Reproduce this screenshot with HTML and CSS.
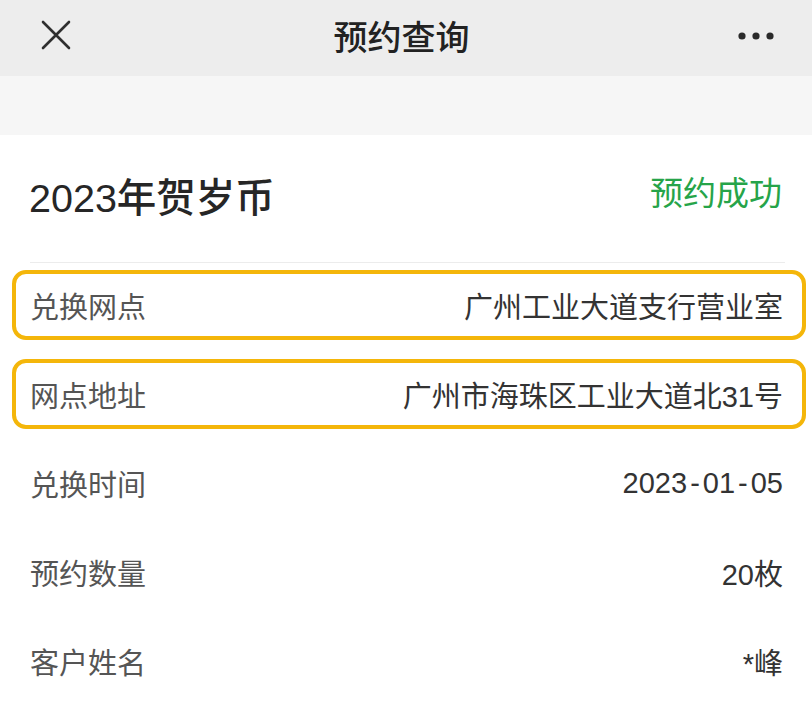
FILE: index.html
```html
<!DOCTYPE html>
<html lang="zh-CN">
<head>
<meta charset="utf-8">
<title>预约查询</title>
<link rel="stylesheet" href="styles.css">
</head>
<body>
<header class="navbar">
  <svg class="icon-close" width="30" height="30" viewBox="0 0 30 30"><path d="M2 2 L28 28 M28 2 L2 28" stroke="#2f2f2f" stroke-width="2.6" stroke-linecap="round"/></svg>
  <div class="nav-title">预约查询</div>
  <svg class="icon-more" width="36" height="10" viewBox="0 0 36 10"><circle cx="4" cy="5" r="3.6" fill="#2a2a2a"/><circle cx="18" cy="5" r="3.6" fill="#2a2a2a"/><circle cx="32" cy="5" r="3.6" fill="#2a2a2a"/></svg>
</header>
<div class="band"></div>
<main class="card">
  <div class="card-head">
    <div class="card-title">2023年贺岁币</div>
    <div class="status">预约成功</div>
  </div>
  <div class="divider"></div>
  <div class="rows">
    <div class="row boxed"><span class="label">兑换网点</span><span class="value">广州工业大道支行营业室</span></div>
    <div class="row boxed"><span class="label">网点地址</span><span class="value">广州市海珠区工业大道北31号</span></div>
    <div class="row"><span class="label">兑换时间</span><span class="value">2023<span class="dash">-</span>01<span class="dash">-</span>05</span></div>
    <div class="row"><span class="label">预约数量</span><span class="value">20枚</span></div>
    <div class="row"><span class="label">客户姓名</span><span class="value">*峰</span></div>
  </div>
</main>
</body>
</html>
```
FILE: styles.css
```css
html, body {
  margin: 0;
  padding: 0;
  background: #ffffff;
  font-family: "Liberation Sans", "Noto Sans CJK SC", sans-serif;
  width: 812px;
  height: 723px;
  overflow: hidden;
}
.navbar {
  height: 76px;
  background: #ededed;
  display: flex;
  align-items: center;
  justify-content: space-between;
  padding: 0 38px 0 41px;
  box-sizing: border-box;
}
.icon-close { display: block; margin-top: -6px; }
.nav-title {
  font-size: 34px;
  font-weight: 500;
  color: #222;
  margin-right: 6px;
  margin-top: -6px;
}
.icon-more { display: block; margin-top: -4px; }
.band {
  height: 59px;
  background: #f6f6f6;
}
.card {
  background: #fff;
}
.card-head {
  display: flex;
  justify-content: space-between;
  align-items: center;
  padding: 37px 30px 46px 29px;
  height: 44px;
}
.card-title {
  font-size: 39.5px;
  font-weight: 500;
  color: #262626;
}
.status {
  font-size: 33px;
  color: #26a449;
  margin-top: -6px;
}
.divider {
  height: 1px;
  background: #ececec;
  margin: 0 27px 0 30px;
}
.rows {
  padding-top: 7px;
}
.row {
  display: flex;
  justify-content: space-between;
  align-items: center;
  height: 70px;
  box-sizing: border-box;
  margin: 0 6px 19px 12px;
  padding: 0 19px 0 14px;
  border: 4px solid transparent;
  border-radius: 14px;
  font-size: 29px;
}
.row.boxed {
  border-color: #f4b60a;
}
.label { color: #555; }
.value { color: #333; }
.dash { padding: 0 3px; }
```
